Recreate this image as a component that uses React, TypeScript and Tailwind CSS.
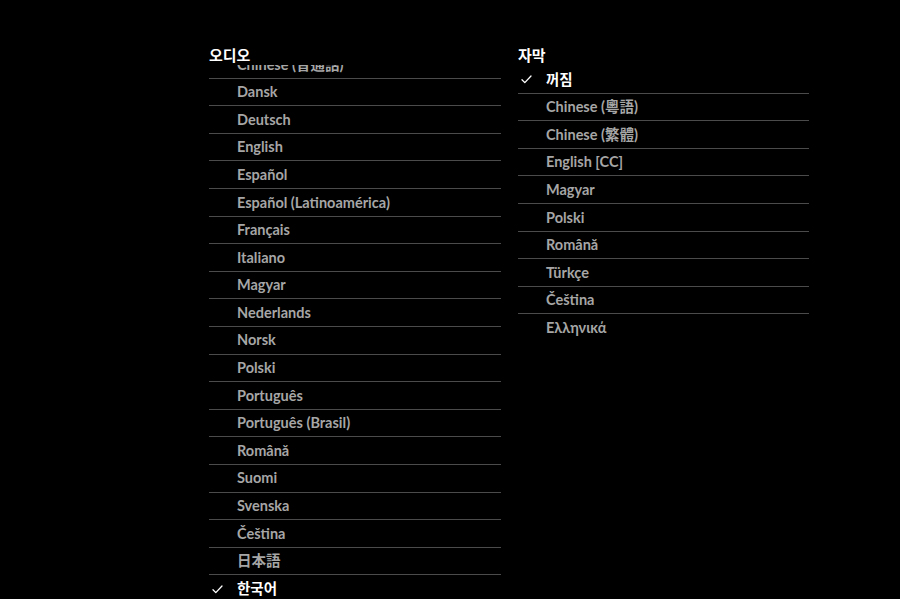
import React from 'react';

const audio = [
  'Chinese (普通話)',
  'Dansk',
  'Deutsch',
  'English',
  'Español',
  'Español (Latinoamérica)',
  'Français',
  'Italiano',
  'Magyar',
  'Nederlands',
  'Norsk',
  'Polski',
  'Português',
  'Português (Brasil)',
  'Română',
  'Suomi',
  'Svenska',
  'Čeština',
  '日本語',
  '한국어',
];

const subtitles = [
  '꺼짐',
  'Chinese (粵語)',
  'Chinese (繁體)',
  'English [CC]',
  'Magyar',
  'Polski',
  'Română',
  'Türkçe',
  'Čeština',
  'Ελληνικά',
];

function Check() {
  return (
    <svg width="11" height="9" viewBox="0 0 11 9" fill="none" className="text-white">
      <path d="M1 4.8 L3.8 7.6 L10 1" stroke="currentColor" strokeWidth="1.3" strokeLinecap="round" strokeLinejoin="round" />
    </svg>
  );
}

function Row({ label, selected, last }: { label: string; selected: boolean; last?: boolean }) {
  return (
    <li
      className={`flex h-[27.6px] items-center pt-[1px] ${last ? '' : 'border-b border-[#4b4b4b]'}`}
    >
      <span className="flex w-[28px] shrink-0 justify-start pl-[3px]">{selected && <Check />}</span>
      <span
        className={`text-[14.5px] font-bold leading-none whitespace-nowrap ${
          selected ? 'text-white' : 'text-[#a6a6a6]'
        }`}
      >
        {label}
      </span>
    </li>
  );
}

export default function App() {
  return (
    <div
      className="h-[599px] w-[900px] overflow-hidden bg-black"
      style={{ fontFamily: 'Lato, "Noto Sans CJK KR", "Noto Sans", sans-serif' }}
    >
      <div className="flex gap-[17px] pl-[209px] pt-[45px]">
        <section className="w-[292px]">
          <h2 className="h-[20px] text-[15px] font-bold leading-[20px] text-white">오디오</h2>
          <div className="h-[600px] overflow-hidden">
            <ul className="-mt-[14px]">
              {audio.map((a) => (
                <Row key={a} label={a} selected={a === '한국어'} />
              ))}
            </ul>
          </div>
        </section>
        <section className="w-[291px]">
          <h2 className="h-[20px] text-[15px] font-bold leading-[20px] text-white">자막</h2>
          <ul className="pt-[1px]">
            {subtitles.map((s, i) => (
              <Row key={s} label={s} selected={s === '꺼짐'} last={i === subtitles.length - 1} />
            ))}
          </ul>
        </section>
      </div>
    </div>
  );
}
